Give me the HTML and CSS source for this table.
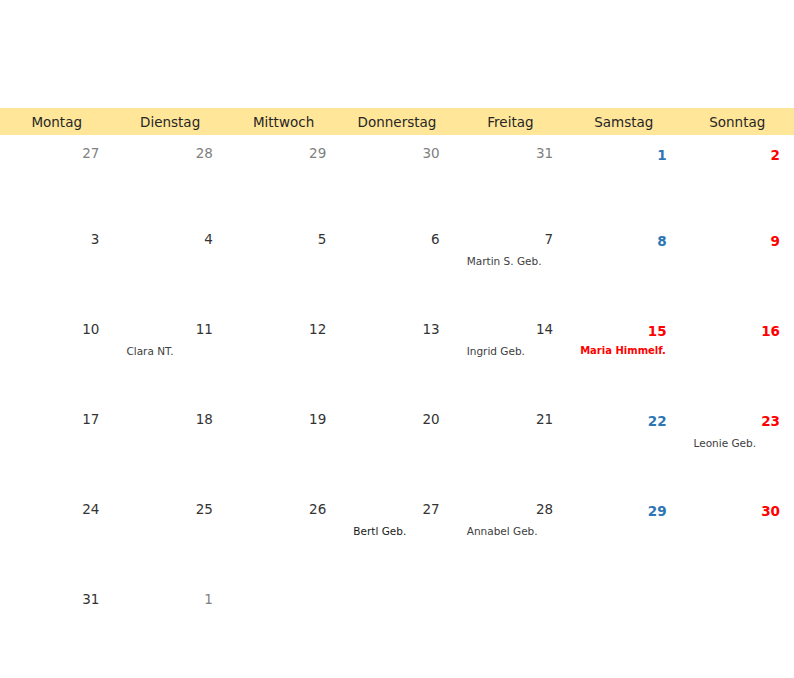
FILE: index.html
```html
<!DOCTYPE html>
<html lang="de">
<head>
<meta charset="utf-8">
<title>Kalender</title>
<link rel="stylesheet" href="styles.css">
</head>
<body>
<div class="cal">
  <div class="head">
    <div>Montag</div><div>Dienstag</div><div>Mittwoch</div><div>Donnerstag</div><div>Freitag</div><div>Samstag</div><div>Sonntag</div>
  </div>
  <div class="week first">
    <div class="day"><span class="num other">27</span></div>
    <div class="day"><span class="num other">28</span></div>
    <div class="day"><span class="num other">29</span></div>
    <div class="day"><span class="num other">30</span></div>
    <div class="day"><span class="num other">31</span></div>
    <div class="day"><span class="num sat">1</span></div>
    <div class="day"><span class="num sun">2</span></div>
  </div>
  <div class="week">
    <div class="day"><span class="num">3</span></div>
    <div class="day"><span class="num">4</span></div>
    <div class="day"><span class="num">5</span></div>
    <div class="day"><span class="num">6</span></div>
    <div class="day"><span class="num">7</span><span class="ev">Martin S. Geb.</span></div>
    <div class="day"><span class="num sat">8</span></div>
    <div class="day"><span class="num sun">9</span></div>
  </div>
  <div class="week">
    <div class="day"><span class="num">10</span></div>
    <div class="day"><span class="num">11</span><span class="ev">Clara NT.</span></div>
    <div class="day"><span class="num">12</span></div>
    <div class="day"><span class="num">13</span></div>
    <div class="day"><span class="num">14</span><span class="ev">Ingrid Geb.</span></div>
    <div class="day"><span class="num sun">15</span><span class="ev hol">Maria Himmelf.</span></div>
    <div class="day"><span class="num sun">16</span></div>
  </div>
  <div class="week">
    <div class="day"><span class="num">17</span></div>
    <div class="day"><span class="num">18</span></div>
    <div class="day"><span class="num">19</span></div>
    <div class="day"><span class="num">20</span></div>
    <div class="day"><span class="num">21</span></div>
    <div class="day"><span class="num sat">22</span></div>
    <div class="day"><span class="num sun">23</span><span class="ev">Leonie Geb.</span></div>
  </div>
  <div class="week">
    <div class="day"><span class="num">24</span></div>
    <div class="day"><span class="num">25</span></div>
    <div class="day"><span class="num">26</span></div>
    <div class="day"><span class="num">27</span><span class="ev dark">Bertl Geb.</span></div>
    <div class="day"><span class="num">28</span><span class="ev">Annabel Geb.</span></div>
    <div class="day"><span class="num sat">29</span></div>
    <div class="day"><span class="num sun">30</span></div>
  </div>
  <div class="week">
    <div class="day"><span class="num">31</span></div>
    <div class="day"><span class="num other">1</span></div>
    <div class="day"></div>
    <div class="day"></div>
    <div class="day"></div>
    <div class="day"></div>
    <div class="day"></div>
  </div>
</div>
</body>
</html>
```
FILE: styles.css
```css
html, body {
  margin: 0;
  padding: 0;
  background: #ffffff;
}
body {
  font-family: "DejaVu Sans", "Liberation Sans", sans-serif;
  color: #262626;
}
.cal {
  padding-top: 108px;
  width: 794px;
}
.head {
  display: grid;
  grid-template-columns: repeat(7, 1fr);
  background: #ffe699;
  height: 27px;
  align-items: center;
  font-size: 13.5px;
  padding-top: 1px;
  box-sizing: border-box;
  color: #262626;
}
.head > div {
  text-align: center;
}
.week {
  display: grid;
  grid-template-columns: repeat(7, 1fr);
  height: 90px;
}
.week.first {
  height: 86px;
}
.day {
  display: flex;
  flex-direction: column;
  padding: 10px 14px 0 13px;
}
.num {
  text-align: right;
  font-size: 13.5px;
  line-height: 16px;
  color: #333333;
}
.num.other {
  color: #808080;
}
.num.sat {
  color: #2e75b6;
  font-weight: bold;
  padding-top: 2px;
}
.num.sun {
  color: #ff0000;
  font-weight: bold;
  padding-top: 2px;
}
.ev {
  font-size: 10.5px;
  line-height: 12px;
  margin-top: 8px;
  color: #404040;
  white-space: nowrap;
}
.ev.dark {
  color: #1a1a1a;
}
.ev.hol {
  color: #ff0000;
  font-weight: bold;
  font-size: 10px;
  margin-top: 6px;
}
```
